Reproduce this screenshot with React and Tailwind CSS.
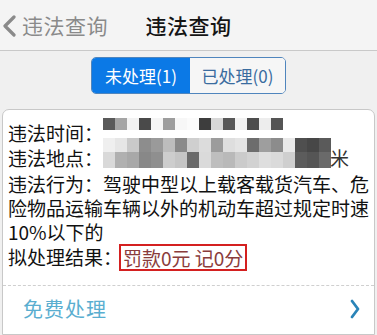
import React from "react";

const row1 = ["#5a5a5a","#a5a5a5","#f3f3f3","#4a4a4a","#f5f5f5","#9d9d9d","#f7f7f7","#fbfbfb","#3d3d3d","#d8d8d8","#585858","#f2f2f2","#4d4d4d","#ededed","#555555"];
const row2a = ["#efefef","#e6e6e6","#c9c9c9","#8d8d8d","#9a9a9a","#bdbdbd","#8a8a8a","#cfcfcf","#dcdcdc","#9c9c9c","#dedede","#e4e4e4","#6d6d6d","#9e9e9e","#8c8c8c","#e9e9e9","#4f4f4f","#474747","#5a5a5a"];
const row2b = ["#d9d9d9","#b0b0b0","#a8a8a8","#888888","#8f8f8f","#cdcdcd","#c5c5c5","#6a6a6a","#dadada","#bebebe","#b9b9b9","#cbcbcb","#d2d2d2","#dedede","#dadada","#cfcfcf","#5c5c5c","#555555","#6a6a6a"];

export default function App() {
  return (
    <div className="w-[377px] h-[335px] overflow-hidden bg-[#f0f0f0] flex flex-col" style={{ fontFamily: '"Noto Sans CJK SC", "Noto Sans", sans-serif' }}>
      {/* header */}
      <div className="h-[51px] shrink-0 bg-[#f4f4f4] border-b border-[#c9c9c9] grid grid-cols-[1fr_auto_1fr] items-center">
        <div className="flex items-center pl-[2px] text-[#8a8a8a]">
          <svg width="14" height="22" viewBox="0 0 14 22" className="mt-[1px]">
            <path d="M12 2 L3 11 L12 20" fill="none" stroke="#8a8a8a" strokeWidth="3.2" strokeLinecap="round" strokeLinejoin="round" />
          </svg>
          <span className="ml-[6px] text-[21px] leading-none tracking-[0.5px]">违法查询</span>
        </div>
        <div className="text-[21px] leading-none text-[#141414] font-medium tracking-[0.5px]">违法查询</div>
        <div />
      </div>

      {/* tabs */}
      <div className="mt-[6px] flex justify-center">
        <div className="flex w-[195px] h-[37px] rounded-[5px] border-[1.5px] border-[#4f85bd] overflow-hidden text-[17px]">
          <div className="w-[98px] bg-[#0b79e6] text-white flex items-center justify-center">未处理(1)</div>
          <div className="flex-1 bg-[#f6f6f6] text-[#3a6c9f] flex items-center justify-center">已处理(0)</div>
        </div>
      </div>

      {/* card */}
      <div className="mt-[15px] mx-[2px] flex-1 bg-white border border-[#c8c8c8] rounded-t-[7px] pt-[10px] text-[19px] text-[#111] flex flex-col">
        <div className="pl-[5px] pr-[2px]">
          <div className="flex h-[25px] leading-[25px] items-start">
            <span className="w-[95px] shrink-0">违法时间：</span>
            <div className="flex -mt-[2px] h-[12px]">
              {row1.map((c, i) => (
                <div key={i} className="w-[12px] h-[12px]" style={{ backgroundColor: c }} />
              ))}
            </div>
          </div>
          <div className="flex h-[25px] leading-[25px] items-start">
            <span className="w-[95px] shrink-0">违法地点：</span>
            <div className="flex flex-col -mt-[7px]">
              <div className="flex">
                {row2a.map((c, i) => (
                  <div key={i} className="w-[12px] h-[14px]" style={{ backgroundColor: c }} />
                ))}
              </div>
              <div className="flex">
                {row2b.map((c, i) => (
                  <div key={i} className="w-[12px] h-[16px]" style={{ backgroundColor: c }} />
                ))}
              </div>
            </div>
            <span className="ml-[-1px] text-[#333]">米</span>
          </div>
          <p className="mt-[2px] leading-[24px] whitespace-nowrap">
            违法行为：驾驶中型以上载客载货汽车、危<br />
            险物品运输车辆以外的机动车超过规定时速<br />
            10%以下的
          </p>
          <div className="flex items-center h-[27px]">
            <span>拟处理结果：</span>
            <span className="-ml-[3px] border-2 border-[#d42020] px-[2px] h-[27px] leading-[23px] text-[#8a3c3c]">罚款0元 记0分</span>
          </div>
        </div>
        <div className="mt-[14px] border-t border-dashed border-[#cfcfcf]" />
        <div className="h-[46px] flex items-center justify-between pl-[20px] pr-[14px]">
          <span className="text-[20px] text-[#5aaed0] tracking-[1px]">免费处理</span>
          <svg width="10" height="20" viewBox="0 0 10 20">
            <path d="M2 2 L8 10 L2 18" fill="none" stroke="#2a84b8" strokeWidth="2.8" strokeLinecap="round" strokeLinejoin="round" />
          </svg>
        </div>
      </div>
    </div>
  );
}
